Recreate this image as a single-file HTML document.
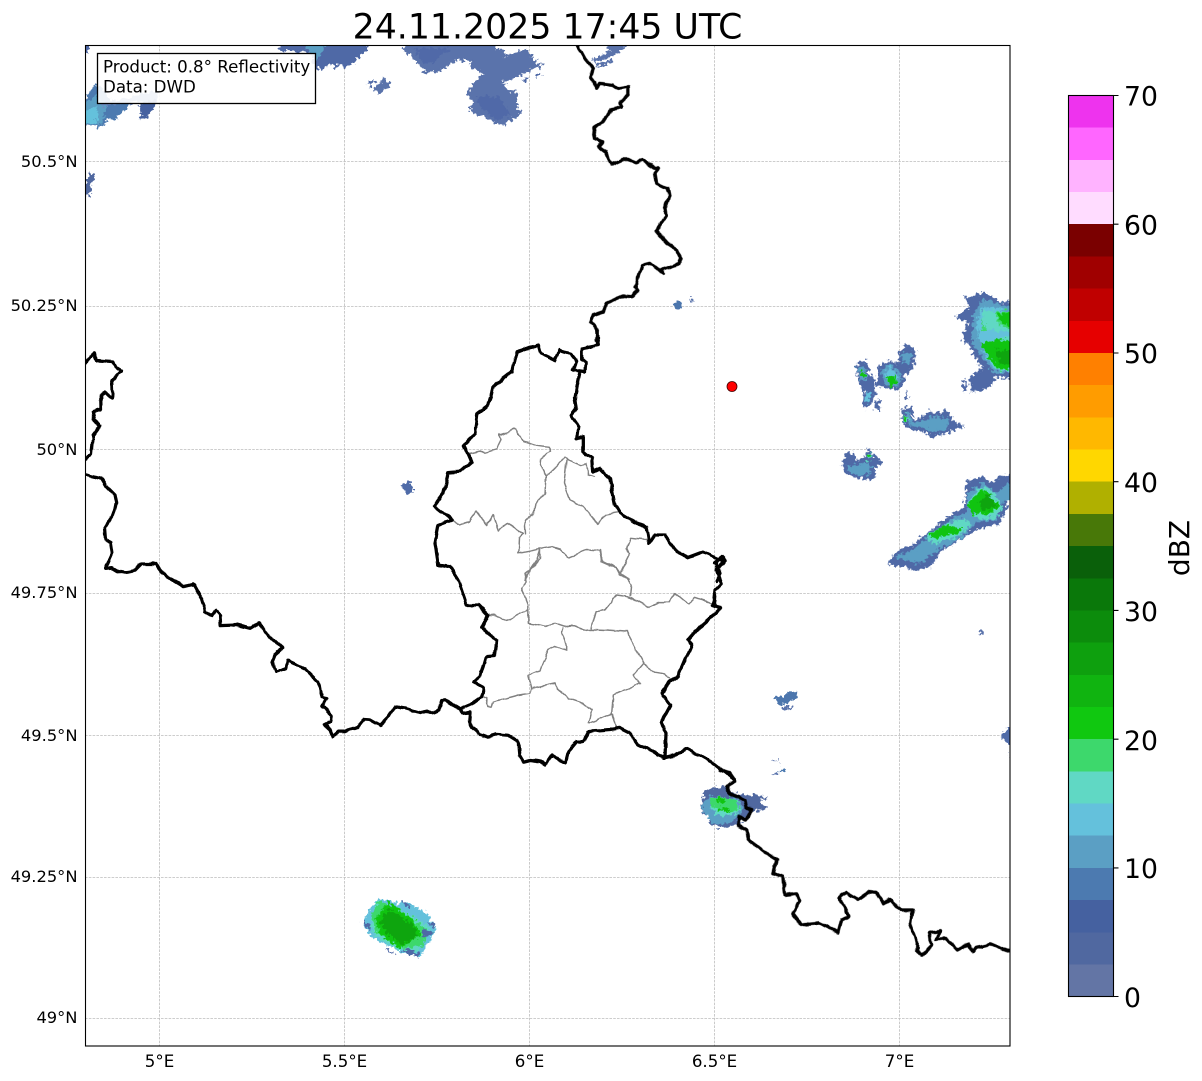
<!DOCTYPE html>
<html lang="en">
<head>
<meta charset="utf-8">
<title>Radar 24.11.2025 17:45 UTC</title>
<style>
html,body{margin:0;padding:0;background:#fff;width:1202px;height:1081px;overflow:hidden}
svg{display:block}
text{font-family:"DejaVu Sans",sans-serif;fill:#000}
.g{stroke:#bdbdbd;stroke-width:.8;stroke-dasharray:2.6 1.2;fill:none}
.b{fill:none;stroke:#000;stroke-width:9.8;stroke-linejoin:round;stroke-linecap:round}
.y{fill:none;stroke:#808080;stroke-width:4.4;stroke-linejoin:round;stroke-linecap:round}
.o{fill:#4f69a6;stroke:#4f69a6;stroke-width:3}
.m{fill:#5b9fc4;stroke:#5b9fc4;stroke-width:3}
.c{fill:#64c1dc}
.t{fill:#60d8c4}
.l{fill:#3dd86c}
.v{fill:#10c410}
.d{fill:#0ea50e}
</style>
</head>
<body>
<svg width="1202" height="1081" viewBox="0 0 1202 1081" xmlns="http://www.w3.org/2000/svg">
<defs>
<clipPath id="ax"><rect x="85.5" y="45.5" width="924.5" height="1000.5"/></clipPath>
<filter id="rough" filterUnits="userSpaceOnUse" x="0" y="0" width="1202" height="1081" color-interpolation-filters="sRGB">
<feTurbulence type="fractalNoise" baseFrequency=".28" numOctaves="2" seed="4" result="n"/>
<feDisplacementMap in="SourceGraphic" in2="n" scale="9" xChannelSelector="R" yChannelSelector="G"/>
</filter>
<filter id="wig" filterUnits="userSpaceOnUse" x="0" y="0" width="1202" height="1081" color-interpolation-filters="sRGB">
<feTurbulence type="fractalNoise" baseFrequency=".09" numOctaves="2" seed="7" result="n"/>
<feDisplacementMap in="SourceGraphic" in2="n" scale="4" xChannelSelector="R" yChannelSelector="G"/>
</filter>
</defs>
<rect width="1202" height="1081" fill="#fff"/>
<text x="547.5" y="38.5" font-size="34.72" text-anchor="middle">24.11.2025 17:45 UTC</text>

<g clip-path="url(#ax)">
<!-- grid -->
<g class="g">
<path d="M159.5 45V1046M344.5 45V1046M529.5 45V1046M714.5 45V1046M899.5 45V1046"/>
<path d="M85 161.5H1010M85 306.5H1010M85 449.5H1010M85 593.5H1010M85 735.5H1010M85 877.5H1010M85 1018.5H1010"/>
</g>

<g filter="url(#rough)">
<!-- radar: top -->
<g transform="translate(270,40) scale(.33333)">
<polygon class="o" points="25,25 40,12 290,12 290,30 240,75 225,80 205,70 195,88 185,70 150,88 130,70 135,40 50,30 35,37"/>
<polygon fill="#5b9fc4" points="100,10 170,10 140,60 125,50"/>
<polygon class="o" points="295,130 310,118 315,125 302,140"/>
<polygon fill="#5a73ab" points="310,145 345,113 362,133 330,165"/>
<polygon fill="#5a73ab" stroke="#5a73ab" stroke-width="3" points="400,30 410,12 670,12 675,30 700,30 705,45 690,55 770,28 800,70 820,68 805,85 790,85 730,115 695,125 720,160 738,155 745,170 735,185 745,195 735,205 757,215 740,230 700,255 680,250 640,225 620,225 600,205 610,190 590,160 640,100 600,80 610,60 560,60 500,95 465,95 420,40 410,40"/>
<polygon fill="#5069a8" points="620,170 690,170 720,225 680,240 630,200"/>
<polygon fill="#5069a8" points="430,25 540,25 490,70 460,70"/>
<polygon class="o" points="760,120 778,110 775,120 765,125"/>
<polygon class="o" points="800,105 815,97 812,105 803,110"/>
</g>
<g transform="scale(.33333)">
<polygon class="o" points="250,130 270,130 262,160 250,160"/>
<polygon fill="#4c7ab0" points="250,300 285,255 300,260 330,300 360,310 390,300 375,330 345,360 325,355 310,382 270,375 250,380"/>
<polygon fill="#5b9fc4" points="250,315 290,285 320,320 305,375 270,370 250,375"/>
<polygon fill="#64c1dc" points="250,330 290,320 295,365 250,370"/>
<polygon fill="#4561a0" points="415,350 425,335 415,315 470,290 468,315 440,355 425,360"/>
<polygon fill="#6f8bc0" points="300,310 480,270 470,300 300,320"/>
<polygon fill="#5068a0" points="270,520 282,525 270,590 250,590 250,560"/>
</g>
<g transform="translate(560,40) scale(.33333)">
<polygon fill="#5a73ab" points="143,12 205,12 180,38 100,70 95,58 150,35"/>
<polygon fill="#5a73ab" points="105,75 155,58 158,68 110,85"/>
<polygon fill="#4c76ad" points="340,790 365,783 368,800 350,807"/>
<polygon fill="#5a73ab" points="390,772 395,770 402,783 397,785"/>
</g>
<polygon fill="#4f6ba8" points="401,484 411,481 414,492 405,495"/>

<!-- radar: east -->
<g transform="translate(840,280) scale(.33333)">
<!-- A -->
<polygon class="o" points="370,42 380,55 400,50 430,38 460,50 480,70 530,60 530,295 465,290 460,310 440,320 430,330 395,335 390,290 430,268 405,230 385,190 370,180 375,150 385,125 350,110 385,85 385,70"/>
<polygon fill="#4f69a6" points="370,300 378,300 378,335 370,335"/>
<polygon class="m" points="400,100 430,60 470,70 530,90 530,280 460,275 425,230 395,180 400,140"/>
<polygon class="c" points="410,120 430,80 470,85 530,100 530,275 465,270 435,225 415,175"/>
<polygon class="t" points="425,90 530,100 530,150 470,155 435,145"/>
<polygon class="t" points="420,190 470,175 530,170 530,270 470,270"/>
<polygon class="l" points="465,95 530,90 530,150 475,135"/>
<polygon class="l" points="425,115 440,150 425,150"/>
<polygon class="v" points="420,190 470,175 530,185 530,262 475,268 445,230"/>
<polygon class="v" points="472,100 530,95 530,140 482,128"/>
<polygon class="d" points="465,210 530,210 530,250 480,255"/>
<!-- B -->
<polygon class="o" points="48,260 60,245 82,245 85,275 100,300 105,340 95,370 80,382 68,380 72,330 58,305"/>
<polygon class="m" points="52,265 70,255 80,285 78,300 62,298"/>
<polygon class="c" points="75,340 95,335 90,360 75,370"/>
<polygon class="v" points="58,275 75,275 72,292 62,290"/>
<polygon class="o" points="105,365 118,362 120,388 105,385"/>
<!-- C -->
<polygon class="o" points="115,260 150,240 175,255 180,220 195,195 220,200 228,225 215,265 195,280 190,310 170,328 130,320 110,315 115,285"/>
<polygon class="m" points="125,275 150,255 175,275 185,300 165,322 135,310"/>
<polygon class="c" points="132,278 150,262 172,280 175,300 160,318 140,305"/>
<polygon class="v" points="140,292 165,285 170,310 150,320"/>
<polygon class="m" points="185,225 205,215 215,230 205,250 190,245"/>
<polygon fill="#4f69a6" points="193,335 200,332 207,358 200,358"/>
<!-- D -->
<polygon class="o" points="185,395 195,380 213,385 220,420 250,410 265,395 290,400 320,390 330,405 345,430 368,432 368,443 345,445 328,458 275,470 260,460 240,450 215,450 190,430"/>
<polygon class="m" points="195,405 210,400 215,430 250,425 270,415 300,410 325,420 320,445 280,455 245,440 215,440"/>
<polygon class="t" points="192,405 202,405 205,425 192,425"/>
<polygon class="v" points="193,408 200,408 200,422 193,422"/>
<!-- E -->
<polygon class="o" points="10,545 20,520 40,520 50,545 75,530 85,505 95,520 118,540 125,550 110,560 100,565 110,590 85,598 45,590 15,580"/>
<polygon class="m" points="20,560 50,555 75,545 95,560 90,580 60,585 30,575"/>
<polygon class="t" points="78,525 90,515 100,535 85,545"/>
<polygon class="v" points="82,522 90,520 92,535 84,535"/>
<!-- F -->
<polygon class="o" points="145,848 175,812 210,800 250,770 320,715 375,680 380,605 430,590 450,610 485,590 530,585 530,660 495,660 500,680 480,730 440,740 410,745 380,765 300,815 270,860 225,872 195,855 165,860"/>
<polygon class="m" points="170,830 220,810 265,770 330,720 380,700 385,640 430,610 470,640 505,610 530,650 485,670 470,720 410,725 360,775 290,810 240,850 195,840"/>
<polygon class="t" points="255,770 320,730 375,715 395,735 350,775 280,790"/>
<polygon class="t" points="380,670 420,620 450,625 490,680 465,715 410,715"/>
<polygon class="v" points="265,770 310,735 370,745 350,760 290,775"/>
<polygon class="v" points="380,675 430,625 450,650 480,680 440,705 400,700"/>
<polygon class="d" points="415,670 445,640 470,680 430,695"/>
</g>

<!-- radar: south cells -->
<g transform="translate(660,620) scale(.33333)">
<polygon fill="#4c76ad" points="345,232 378,225 380,215 410,213 410,230 395,240 398,245 375,250 350,255"/>
<polygon fill="#5a73ab" points="367,260 400,255 400,262 385,265 385,272 370,272"/>
<polygon fill="#5a73ab" points="333,421 354,421 354,425 333,425"/>
<polygon fill="#4c7ab0" points="355,447 373,445 378,458 358,458"/>
<polygon fill="#5a73ab" points="336,457 358,457 358,464 338,464"/>
<polygon fill="#5a73ab" points="952,42 968,30 972,36 958,48"/>
<polygon fill="#4f6ba8" points="1022,345 1045,320 1075,320 1075,385 1040,370"/>
<polygon fill="#5a73ab" points="1042,405 1070,400 1070,408"/>
<polygon fill="#5068a0" points="133,513 175,500 200,500 205,515 260,525 285,525 323,532 323,537 303,540 303,555 327,560 327,566 285,572 260,590 232,610 215,620 172,623 148,612 148,588 126,585 128,545 130,530"/>
<polygon fill="#5b9fc4" points="128,555 150,528 235,535 250,560 240,585 215,610 170,612 150,600 130,575"/>
<polygon class="t" points="150,535 235,540 238,580 175,590 150,560"/>
<polygon class="l" points="150,532 205,532 235,545 235,575 175,570 150,555"/>
<polygon class="v" points="170,535 195,535 195,547 170,547"/>
<polygon class="v" points="175,562 215,570 200,575 175,570"/>
</g>
<g transform="translate(340,780) scale(.33333)">
<polygon class="c" points="85,395 115,355 180,370 200,365 220,375 270,405 265,420 290,435 280,465 265,490 240,530 205,525 180,515 130,490 90,465 70,430"/>
<polygon class="t" points="90,440 110,360 175,385 250,430 275,450 235,515 175,510 110,470"/>
<polygon class="l" points="95,400 115,365 160,375 262,450 252,495 190,505 105,455"/>
<polygon class="v" points="105,420 145,365 220,420 245,465 180,505 125,470"/>
<polygon class="d" points="122,420 148,385 220,435 235,470 185,495 135,455"/>
<g fill="#4f69a6">
<polygon points="67,425 75,422 95,440 85,447"/>
<polygon points="262,425 283,430 290,437 283,442 262,430"/>
<polygon points="185,365 195,365 212,380 205,385"/>
<polygon points="140,505 165,518 160,523 137,510"/>
<polygon points="185,510 205,505 235,520 240,532 205,525"/>
<polygon points="250,450 280,455 270,470 245,465"/>
</g>
</g>
</g>

<!-- internal boundaries (grey) -->
<g filter="url(#wig)">
<g transform="translate(420,330) scale(.33333)" class="y">
<polyline points="150,372 180,365 195,368 230,358 243,325 235,312 245,312 285,297 310,335 350,347 385,352 390,365 362,385 360,405 378,440 375,490 345,520 340,550 315,572 318,610"/>
<polyline points="95,570 120,585 145,575 168,543 200,585 218,555 235,603 260,578 310,610 297,620 295,670 355,658 395,650 420,658 445,683 500,660 538,663 550,695 590,715 600,730 628,745"/>
<polyline points="378,440 410,410 432,380 445,390 480,405 498,400 505,435 525,440"/>
<polyline points="440,385 432,460 450,510 490,530 535,580 555,555 595,548"/>
<polyline points="360,660 350,690 320,735 318,750"/>
<polyline points="600,730 630,670 620,655 632,625 680,630 685,640"/>
</g>
<g transform="translate(420,550) scale(.33333)" class="y">
<polyline points="360,0 360,25 340,50 315,70 320,95 305,115 325,165 325,220 375,230 405,220 435,230 455,228 490,240 515,238 530,185 555,180 590,135 625,140 685,172 715,158 745,158 765,128 805,162 825,142 885,162"/>
<polyline points="540,0 545,35 590,55 600,75 625,85 635,105 632,137"/>
<polyline points="325,180 260,213 225,195 205,195"/>
<polyline points="430,235 425,250 437,280 437,300 405,288 385,300 360,360 325,375 335,415 405,400 415,420 445,445 490,460 515,480 505,520 577,490 590,535"/>
<polyline points="335,415 330,430 295,435 220,455 215,470 205,470 200,445 185,438"/>
<polyline points="515,238 560,240 620,245 670,340 640,375 660,400 650,405 580,435 575,490"/>
<polyline points="670,340 705,365 730,370 748,385"/>
</g>

<!-- national borders -->
<g transform="translate(80,340) scale(.33333)" class="b">
<polyline points="17,70 40,40 50,60 100,63 108,82 124,92 95,122 97,173 85,170 75,157 62,165 63,208 37,217 42,240 62,258 38,290 33,340 17,360"/>
<polyline points="0,400 17,403 65,415 80,440 105,465 110,490 105,515 75,563 78,600 92,607 97,640 77,685 95,683 110,692 135,697 165,692 185,672 230,672 258,708 312,740 340,733 375,795 373,815 395,828 405,813 420,822 422,857 470,855 510,865 535,850 555,875 608,925 585,945 577,965 587,995 617,985 622,962 675,987 715,1027 725,1070 742,1073 727,1100 755,1128 752,1145 733,1155 750,1170 758,1190 775,1175 795,1175 830,1163 852,1137 870,1138 900,1155 925,1130 945,1100 975,1105 1020,1118"/>
</g>
<g transform="translate(420,550) scale(.33333)" class="b">
<polyline points="0,488 25,483 40,490 55,483 65,450 75,450 120,478"/>
<polyline points="50,0 55,45 90,50 115,90 140,165 175,165 205,195 185,235 230,270 225,318 197,320 180,380 162,395 190,410 185,440 150,465 120,478 125,490 150,487 148,512 155,530 180,552 205,560 230,553 265,556 295,575 298,615 310,635 330,630 360,635 375,645 395,615 420,630 437,637 445,605 470,575 490,575 505,545 570,540 600,535 630,550 655,585 700,607 735,622 765,615 800,597 840,617 880,640 925,675 945,690"/>
<polyline points="735,622 738,550 725,515 752,465 725,430 750,395 775,380 815,285 805,270 840,230 880,195 900,175 880,165 885,120 905,100 890,60 915,30 905,20 885,40"/>
</g>
<g transform="translate(420,330) scale(.33333)" class="b">
<polyline points="115,750 90,712 55,705 45,640 55,585 95,570 42,528 70,490 85,428 120,425 155,395 133,345 165,310 172,250 205,225 220,170 275,125 290,65 355,45 362,70 405,90 418,60 450,70 470,95 460,120 495,125 497,100 485,90 485,55 535,45 530,0"/>
<polyline points="480,125 465,200 470,235 455,255 475,290 470,325 490,320 490,365 515,385 518,425 540,415 570,445 578,490 585,525 600,550 640,575 680,590 688,640 705,615 735,615 770,665 805,682 850,665 905,690 915,690 905,680 890,700 900,730 890,750"/>
</g>
<g transform="translate(560,40) scale(.33333)" class="b">
<polyline points="45,0 55,18 75,55 100,85 92,112 105,125 110,145 120,130 160,135 175,145 205,140 205,165 180,190 185,200 155,207 130,245 100,265 105,295 128,305 115,320 135,335 155,372 185,358 205,358 230,368 250,360 285,385 297,385 285,400 290,430 322,445 327,470 315,505 318,525 287,572 320,610 350,630 362,655 355,672 305,690 310,700 272,670 247,675 225,740 232,750 215,770 190,768 140,790 130,815 100,825 92,848 112,870 110,900"/>
</g>
<g transform="translate(720,760) scale(.33333)" class="b">
<polyline points="0,30 30,40 45,62 22,75 30,100 75,122 80,145 97,150 75,180 55,170 55,195 80,210 85,235 110,260 170,298 160,340 190,350 195,405 230,400 240,425 217,458 245,495 295,490 355,518 365,480 385,470 372,435 355,415 380,397 415,418 445,397 470,400 490,430 510,418 545,450 578,450 570,490 590,545 590,575 605,585 635,555 628,518 660,512 650,538 680,535 712,570 745,552 760,575 770,562 810,553 850,570 890,575"/>
</g>
</g>

<circle cx="732" cy="386.5" r="5" fill="#f00" stroke="#400" stroke-width=".8"/>

<!-- info box -->
<rect x="97.5" y="53.5" width="218" height="50" fill="#fff" fill-opacity=".9" stroke="#000" stroke-width="1.3"/>
<text x="103" y="72.5" font-size="16.67">Product: 0.8° Reflectivity</text>
<text x="103" y="92.5" font-size="16.67">Data: DWD</text>
</g>

<rect x="85.5" y="45.5" width="924.5" height="1000.5" fill="none" stroke="#000" stroke-width="1.1"/>

<!-- axis labels -->
<g font-size="16.3" text-anchor="end">
<text x="77.5" y="167">50.5°N</text>
<text x="77.5" y="311">50.25°N</text>
<text x="77.5" y="455">50°N</text>
<text x="77.5" y="598">49.75°N</text>
<text x="77.5" y="741">49.5°N</text>
<text x="77.5" y="882">49.25°N</text>
<text x="77.5" y="1023">49°N</text>
</g>
<g font-size="16.67" text-anchor="middle">
<text x="159.5" y="1067">5°E</text>
<text x="344.5" y="1067">5.5°E</text>
<text x="529.5" y="1067">6°E</text>
<text x="714.5" y="1067">6.5°E</text>
<text x="899.5" y="1067">7°E</text>
</g>

<!-- colorbar -->
<g shape-rendering="crispEdges">
<rect x="1068.5" y="95.5" width="45" height="32.2" fill="#ee33ee"/>
<rect x="1068.5" y="127.7" width="45" height="32.2" fill="#ff66ff"/>
<rect x="1068.5" y="159.9" width="45" height="32.2" fill="#ffb3ff"/>
<rect x="1068.5" y="192.1" width="45" height="32.2" fill="#ffdcff"/>
<rect x="1068.5" y="224.2" width="45" height="32.2" fill="#7a0000"/>
<rect x="1068.5" y="256.4" width="45" height="32.2" fill="#a00000"/>
<rect x="1068.5" y="288.6" width="45" height="32.2" fill="#c00000"/>
<rect x="1068.5" y="320.8" width="45" height="32.2" fill="#e60000"/>
<rect x="1068.5" y="353" width="45" height="32.2" fill="#ff8000"/>
<rect x="1068.5" y="385.2" width="45" height="32.2" fill="#ff9c00"/>
<rect x="1068.5" y="417.3" width="45" height="32.2" fill="#ffb800"/>
<rect x="1068.5" y="449.5" width="45" height="32.2" fill="#ffd700"/>
<rect x="1068.5" y="481.7" width="45" height="32.2" fill="#b0b000"/>
<rect x="1068.5" y="513.9" width="45" height="32.2" fill="#487808"/>
<rect x="1068.5" y="546.1" width="45" height="32.2" fill="#0a600a"/>
<rect x="1068.5" y="578.3" width="45" height="32.2" fill="#0a780a"/>
<rect x="1068.5" y="610.4" width="45" height="32.2" fill="#0c8c0c"/>
<rect x="1068.5" y="642.6" width="45" height="32.2" fill="#0ea00e"/>
<rect x="1068.5" y="674.8" width="45" height="32.2" fill="#10b410"/>
<rect x="1068.5" y="707" width="45" height="32.2" fill="#10c810"/>
<rect x="1068.5" y="739.2" width="45" height="32.2" fill="#3dd86c"/>
<rect x="1068.5" y="771.4" width="45" height="32.2" fill="#60d8c4"/>
<rect x="1068.5" y="803.5" width="45" height="32.2" fill="#64c1dc"/>
<rect x="1068.5" y="835.7" width="45" height="32.2" fill="#5b9fc4"/>
<rect x="1068.5" y="867.9" width="45" height="32.2" fill="#4c7ab0"/>
<rect x="1068.5" y="900.1" width="45" height="32.2" fill="#4561a0"/>
<rect x="1068.5" y="932.3" width="45" height="32.2" fill="#5068a0"/>
<rect x="1068.5" y="964.5" width="45" height="32" fill="#6375a5"/>
</g>
<rect x="1068.5" y="95.5" width="45" height="901" fill="none" stroke="#000" stroke-width="1.1"/>
<path d="M1113.5 95.5h5M1113.5 224.2h5M1113.5 353h5M1113.5 481.7h5M1113.5 610.4h5M1113.5 739.2h5M1113.5 867.9h5M1113.5 996.5h5" stroke="#000" stroke-width="1.1"/>
<g font-size="26.67">
<text x="1124" y="105.5">70</text>
<text x="1124" y="234.5">60</text>
<text x="1124" y="363">50</text>
<text x="1124" y="492">40</text>
<text x="1124" y="621">30</text>
<text x="1124" y="750">20</text>
<text x="1124" y="878">10</text>
<text x="1124" y="1007">0</text>
</g>
<text transform="translate(1189,548) rotate(-90)" font-size="28" text-anchor="middle">dBZ</text>
</svg>
</body>
</html>
